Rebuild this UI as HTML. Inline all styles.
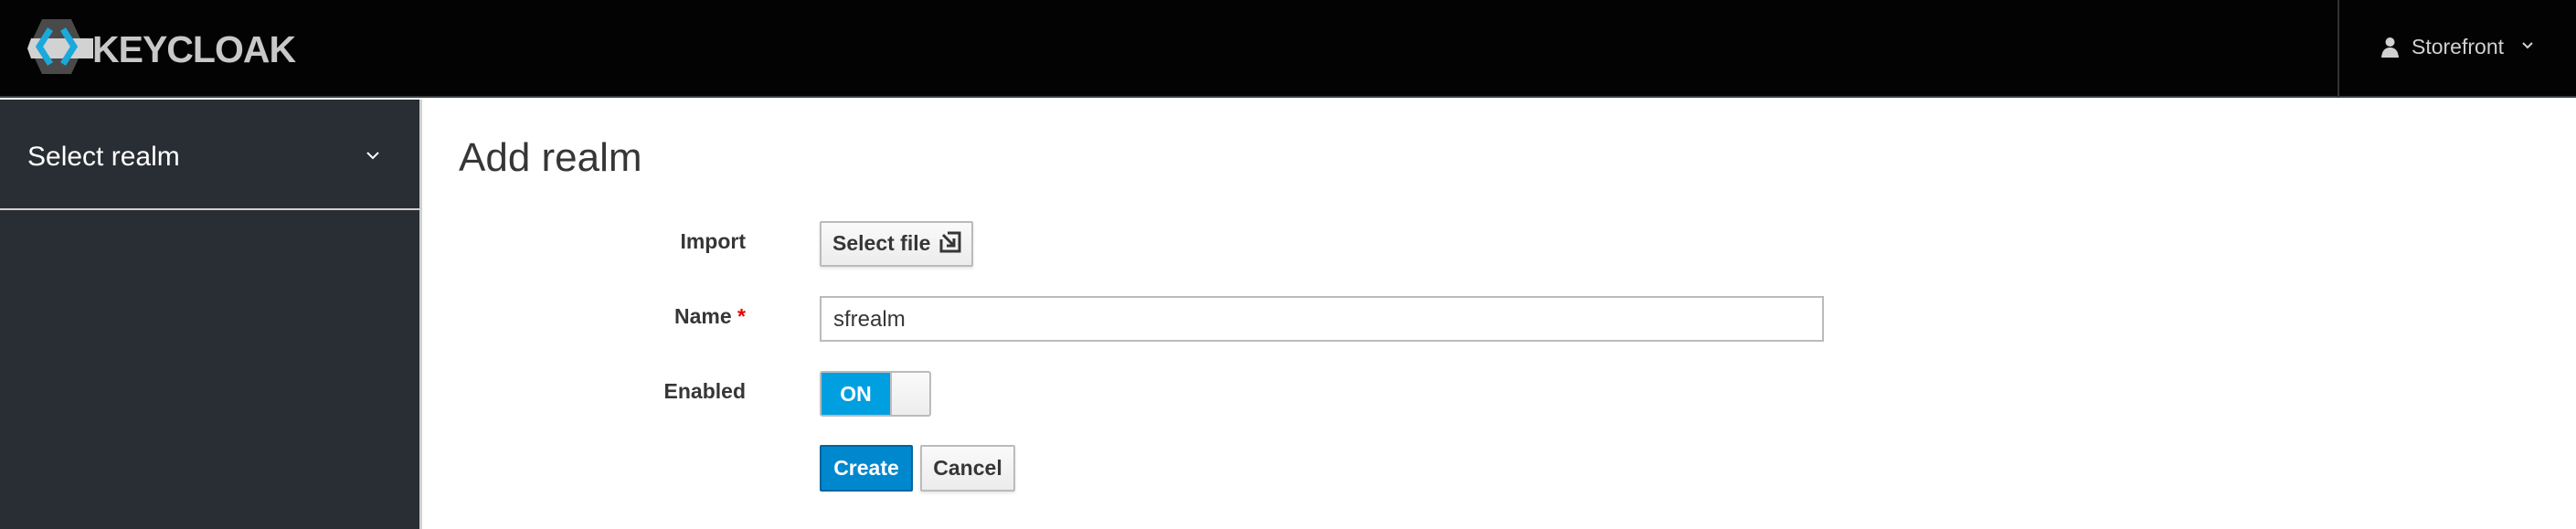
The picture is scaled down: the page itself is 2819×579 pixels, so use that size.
<!DOCTYPE html>
<html><head><style>
*{margin:0;padding:0;box-sizing:border-box}
body{width:2819px;height:579px;overflow:hidden;background:#fff;font-family:"Liberation Sans",sans-serif;position:relative}
.hdr{position:absolute;left:0;top:0;width:2819px;height:107px;background:#030303;border-bottom:2px solid #393f44}
.side{position:absolute;left:0;top:109px;width:462px;height:470px;background:#292e34;border-right:3px solid #d1d1d1}
.abs{position:absolute}
.lbl{position:absolute;font-weight:bold;font-size:23px;color:#363636;text-align:right;width:300px}
.btn{position:absolute;border:2px solid #bbb;border-radius:2px;background:linear-gradient(#fafafa,#ececec);font-size:23px;font-weight:bold;color:#363636;box-shadow:0 2px 3px rgba(0,0,0,.1)}
</style></head><body>
<div class="hdr">
<svg class="abs" style="left:30px;top:20px" width="72" height="62" viewBox="0 0 72 62">
<polygon points="16,1 48,1 62,31 48,61 16,61 2,31" fill="#4a4a4a"/>
<polygon points="4,22 72,22 72,44 4,44 0,33" fill="#d2d2d2"/>
<polyline points="25,12 13,31 25,50" fill="none" stroke="#1ba9db" stroke-width="7"/>
<polyline points="39,12 51,31 39,50" fill="none" stroke="#1ba9db" stroke-width="7"/>
</svg>
<div class="abs" style="left:101px;top:31px;font-size:41px;font-weight:bold;color:#c8c8c8;letter-spacing:-1px">KEYCLOAK</div>
<div class="abs" style="left:2558px;top:0;width:2px;height:107px;background:#333"></div>
<svg class="abs" style="left:2606px;top:41px" width="19" height="22" viewBox="0 0 19 22"><circle cx="9.5" cy="5" r="5" fill="#d1d1d1"/><path d="M0 22 Q1 11 9.5 11 Q18 11 19 22Z" fill="#d1d1d1"/></svg>
<div class="abs" style="left:2639px;top:38px;font-size:23px;color:#d1d1d1">Storefront</div>
<svg class="abs" style="left:2760px;top:46px" width="12" height="8" viewBox="0 0 12 8"><polyline points="1,1 6,6 11,1" fill="none" stroke="#d1d1d1" stroke-width="2"/></svg>
</div>
<div class="side">
<div class="abs" style="left:30px;top:46px;font-size:30px;color:#fff">Select realm</div>
<svg class="abs" style="left:401px;top:57px" width="14" height="9" viewBox="0 0 14 9"><polyline points="1,1 7,7 13,1" fill="none" stroke="#fff" stroke-width="2"/></svg>
<div class="abs" style="left:0;top:119px;width:459px;height:2px;background:#d1d1d1"></div>
</div>
<div class="abs" style="left:502px;top:148px;font-size:44px;color:#363636">Add realm</div>
<div class="lbl" style="left:516px;top:251px">Import</div>
<div class="lbl" style="left:516px;top:333px">Name <span style="color:#e00">*</span></div>
<div class="lbl" style="left:516px;top:415px">Enabled</div>
<div class="btn" style="left:897px;top:242px;width:168px;height:50px;padding:9px 0 0 12px">Select file
<svg style="vertical-align:-3px;margin-left:3px" width="24" height="24" viewBox="0 0 24 24"><path d="M2 9V22H22V2H9" fill="none" stroke="#363636" stroke-width="3"/><path d="M4 4L16 16M8 16H16V8" fill="none" stroke="#363636" stroke-width="3"/></svg></div>
<div class="abs" style="left:897px;top:324px;width:1099px;height:50px;border:2px solid #bbb;font-size:24px;color:#363636;padding:10px 0 0 13px">sfrealm</div>
<div class="abs" style="left:897px;top:406px;width:122px;height:50px;border:2px solid #bbb;border-radius:3px;background:linear-gradient(#fafafa,#ededed)">
<div style="position:absolute;left:0;top:0;width:77px;height:46px;background:#00a0e0;color:#fff;font-weight:bold;font-size:23px;text-align:center;line-height:46px;border-right:2px solid #bbb">ON</div></div>
<div class="abs" style="left:897px;top:487px;width:102px;height:51px;background:#0088ce;border:2px solid #00659c;border-radius:2px;color:#fff;font-weight:bold;font-size:23px;text-align:center;line-height:46px">Create</div>
<div class="btn" style="left:1007px;top:487px;width:104px;height:51px;text-align:center;line-height:46px">Cancel</div>
</body></html>
